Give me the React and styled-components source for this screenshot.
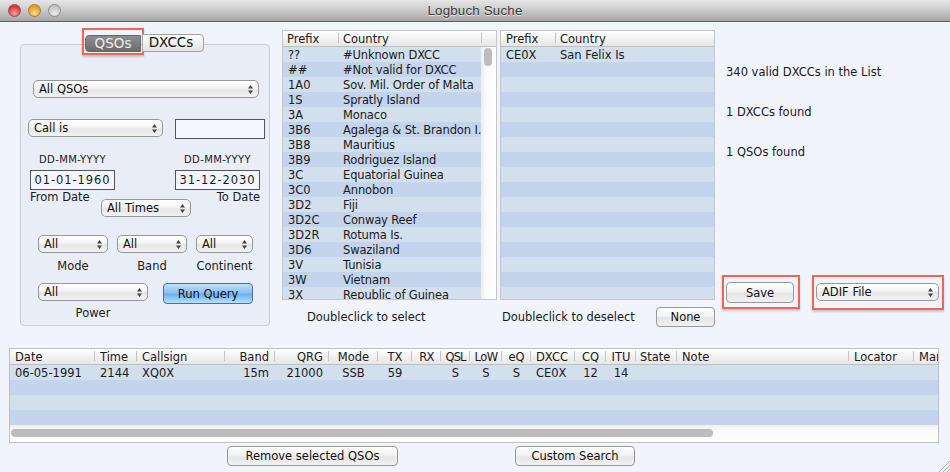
import React from "react";
import styled, { createGlobalStyle } from "styled-components";

const Global = createGlobalStyle`
  html, body { margin: 0; padding: 0; background: #f1f4fd; }
  * { box-sizing: border-box; }
`;
const FONT = `"DejaVu Sans", "Liberation Sans", sans-serif`;

const Window = styled.div`
  position: relative; width: 950px; height: 472px; overflow: hidden;
  background: #f1f4fd; font-family: ${FONT}; font-size: 11.5px; color: #1a1a1a;
`;
const TitleBar = styled.div`
  height: 22px; display: flex; align-items: center; position: relative;
  background: linear-gradient(#e6e6e6, #d0d0d0 40%, #a6a6a6);
  border-bottom: 1px solid #5f5f5f; padding-left: 8px; gap: 7px;
`;
const Light = styled.span`
  width: 13px; height: 13px; border-radius: 50%;
  border: 1px solid ${p => p.$edge};
  background: radial-gradient(circle at 50% 75%, ${p => p.$hi}, ${p => p.$c} 70%);
`;
const Title = styled.div`
  flex: 1; text-align: center; margin-left: -68px; font-size: 13.3px; font-family: "Liberation Sans", sans-serif;
  color: #3c3c3c; text-shadow: 0 1px 0 #e4e4e4; letter-spacing: .2px;
`;
const TopRow = styled.div`display: flex; height: 305px;`;
const LeftCol = styled.div`width: 250px; margin-left: 20px; padding-top: 6px; flex: none;`;
const TabBar = styled.div`
  display: flex; align-items: flex-start; margin-left: 62px; position: relative; z-index: 1; height: 27px;
`;
const Highlight = styled.div`
  display: flex; align-items: ${p => p.$align || "center"}; flex: none;
  border: 2px solid #f26650; box-shadow: 0 2px 2px rgba(0,0,0,.18);
  padding: ${p => p.$pad};
`;
const Tab = styled.div`
  height: 17px; display: flex; align-items: center; justify-content: center; font-size: 13.5px; line-height: 1;
  width: ${p => p.$w}px;
  ${p => p.$on
    ? `background: linear-gradient(#8e8e8e, #6c6c6c); color: #ededed; border-radius: 4px 0 0 4px; border: 1px solid #666;`
    : `background: linear-gradient(#fff, #f0f0f0 50%, #e2e2e2); color: #111; border-radius: 0 4px 4px 0; border: 1px solid #a4a4a4; height: 18px; margin-top: 6px; margin-left: -2px; padding-right: 4px;`}
`;
const Panel = styled.div`
  height: 282px; margin-top: -11px; background: #e9edf8;
  border: 1px solid #c8ccd6; border-radius: 4px;
`;
const Row = styled.div`
  display: flex; align-items: flex-start; margin-top: ${p => p.$top}px; padding-left: ${p => p.$left}px; gap: ${p => p.$gap || 0}px;
`;
const SelectBox = styled.div`
  flex: none; height: 18px; width: ${p => p.$w}px; display: flex; align-items: center; justify-content: space-between;
  padding: 0 5px 0 5px; border: 1px solid #989898; border-radius: 5px; color: #111;
  background: linear-gradient(#fff, #f4f4f4 45%, #e6e6e6 55%, #f2f2f2); font-size: 11.5px;
  white-space: nowrap;
`;
const Arrows = () => (
  <svg width="5" height="9" viewBox="0 0 5 9"><path d="M2.5 0 L5 3.4 H0Z M2.5 9 L5 5.6 H0Z" fill="#444" /></svg>
);
const Select = ({ w, children }) => <SelectBox $w={w}>{children}<Arrows /></SelectBox>;
const TextBox = styled.div`
  width: ${p => p.$w}px; height: 20px; border: 1px solid #555; background: #f3f6fe; flex: none;
  display: flex; align-items: center; justify-content: center; font-size: 11.5px; letter-spacing: .9px;
`;
const DateGrid = styled.div`
  display: grid; grid-template-columns: 71px 14px 60px 16px 69px; margin: 14px 0 0 9px; width: 230px;
`;
const DateCell = styled.div`
  grid-column: ${p => p.$col}; text-align: ${p => p.$align || "center"}; line-height: 14px; white-space: nowrap;
  font-size: ${p => p.$small ? "10px" : "11.5px"};
  letter-spacing: ${p => p.$small ? ".4px" : "0"};
  margin-bottom: ${p => p.$mb || 0}px; margin-top: ${p => p.$mt || 0}px;
  display: ${p => p.$flex ? "flex" : "block"};
`;
const FilterGrid = styled.div`
  display: grid; grid-template-columns: 70px 70px 57px; column-gap: 9px; row-gap: 6px; margin: 18px 0 0 17px; width: 220px;
`;
const Caption = styled.div`
  text-align: center; line-height: 14px; white-space: nowrap;
`;
const PowerRow = styled.div`display: flex; gap: 15px; margin: 10px 0 0 17px; align-items: flex-start;`;
const PowerCol = styled.div`display: flex; flex-direction: column; gap: 5px; width: 110px;`;
const RunButton = styled.div`
  width: 90px; height: 21px; display: flex; align-items: center; justify-content: center;
  border: 1px solid #4a6ea8; border-radius: 4px; color: #111; font-size: 11.5px;
  background: linear-gradient(#c4def8, #8dc0f3 45%, #6cb0f2 55%, #b6e2fb);
`;
const ListsGrid = styled.div`
  display: grid; grid-template-columns: 215px 215px; column-gap: 3px; margin: 8px 0 0 12px; align-content: start;
  flex: none;
`;
const ListBox = styled.div`
  height: 270px; border: 1px solid #c6c6c6; background: #fff; overflow: hidden; display: flex; flex-direction: column;
`;
const Header = styled.div`
  flex: none; height: 16px; display: grid; grid-template-columns: ${p => p.$cols};
  background: linear-gradient(#fff, #f2f2f2 50%, #e6e6e6); border-bottom: 1px solid #c0c0c0; color: #1a1a1a;
`;
const HeadCell = styled.div`
  line-height: 17px; padding: 0 ${p => p.$pr || 0}px 0 ${p => p.$pl || 0}px; white-space: nowrap; overflow: hidden;
  text-align: ${p => p.$align || "left"}; letter-spacing: ${p => p.$ls || 0}px;
  background: linear-gradient(#c4c4c4, #c4c4c4) right 2px / 1px 10px no-repeat;
  ${p => p.$plain ? "background: none;" : ""}
`;
const ListBody = styled.div`flex: 1; display: flex; min-height: 0;`;
const Rows = styled.div`flex: 1; overflow: hidden; min-width: 0;`;
const ListRow = styled.div`
  height: 15px; line-height: 17px; display: grid; grid-template-columns: ${p => p.$cols};
  background: ${p => p.$odd ? "#c3d4ec" : "#d2dfed"}; white-space: nowrap; color: #1a1a1a;
`;
const Cell = styled.div`
  padding: 0 ${p => p.$pr || 0}px 0 ${p => p.$pl || 0}px; text-align: ${p => p.$align || "left"}; overflow: hidden;
  letter-spacing: ${p => p.$ls || 0}px;
`;
const ScrollColumn = styled.div`
  width: 15px; flex: none; padding: 1px 4px 0 3px;
  background: linear-gradient(90deg, #ececec, #fafafa 30%, #fff);
`;
const Thumb = styled.div`height: 18px; border-radius: 4px; background: #bcbcbc;`;
const Hint = styled.div`
  display: flex; align-items: center; height: 20px; margin-top: 7px; padding-left: ${p => p.$left}px; white-space: nowrap;
  justify-content: space-between; letter-spacing: -.05px;
`;
const Button = styled.div`
  flex: none; width: ${p => p.$w}px; height: ${p => p.$h || 21}px; display: flex; align-items: center; justify-content: center;
  border: 1px solid #999; border-radius: 4px; color: #111; font-size: 11.5px; white-space: nowrap;
  background: linear-gradient(#fff, #f3f3f3 45%, #e5e5e5 55%, #f1f1f1);
`;
const RightCol = styled.div`margin: 8px 0 0 7px; flex: none; width: 225px;`;
const Stats = styled.div`
  display: flex; flex-direction: column; gap: 26px; padding: 35px 0 0 4px; height: 245px; line-height: 14px;
`;
const SaveRow = styled.div`display: flex; gap: 12px; align-items: flex-start;`;
const Bottom = styled.div`padding: 21px 0 0 9px;`;
const LogTable = styled.div`
  width: 930px; height: 95px; border: 1px solid #c0c0c0; background: #fff; overflow: hidden; display: flex; flex-direction: column;
`;
const ScrollTrack = styled.div`
  flex: 1; padding: 4px 225px 0 1px; background: linear-gradient(#eeeeee, #fafafa 30%, #fff);
`;
const HThumb = styled.div`height: 8px; border-radius: 4px; background: #bcbcbc;`;
const BottomButtons = styled.div`display: flex; margin: 3px 0 0 218px; gap: 117px;`;
const Grip = styled.svg`position: absolute; right: 0; bottom: 0;`;

const countries = [
  ["??", "#Unknown DXCC"], ["##", "#Not valid for DXCC"], ["1A0", "Sov. Mil. Order of Malta"],
  ["1S", "Spratly Island"], ["3A", "Monaco"], ["3B6", "Agalega & St. Brandon I."],
  ["3B8", "Mauritius"], ["3B9", "Rodriguez Island"], ["3C", "Equatorial Guinea"],
  ["3C0", "Annobon"], ["3D2", "Fiji"], ["3D2C", "Conway Reef"], ["3D2R", "Rotuma Is."],
  ["3D6", "Swaziland"], ["3V", "Tunisia"], ["3W", "Vietnam"], ["3X", "Republic of Guinea"],
];
const logCols = [
  { t: "Date", w: 85, a: "left", pl: 5, v: "06-05-1991" },
  { t: "Time", w: 42, a: "left", pl: 5, v: "2144" },
  { t: "Callsign", w: 88, a: "left", pl: 5, v: "XQ0X" },
  { t: "Band", w: 50, a: "right", pr: 6, v: "15m" },
  { t: "QRG", w: 54, a: "right", pr: 6, v: "21000" },
  { t: "Mode", w: 49, a: "center", v: "SSB" },
  { t: "TX", w: 34, a: "center", v: "59" },
  { t: "RX", w: 29, a: "center", v: "", ls: -0.8 },
  { t: "QSL", w: 29, a: "center", v: "S", ls: -1 },
  { t: "LoW", w: 32, a: "center", v: "S", ls: -0.5 },
  { t: "eQ", w: 29, a: "center", v: "S" },
  { t: "DXCC", w: 44, a: "left", pl: 5, v: "CE0X" },
  { t: "CQ", w: 31, a: "center", v: "12" },
  { t: "ITU", w: 30, a: "center", v: "14" },
  { t: "State", w: 41, a: "left", pl: 4, v: "" },
  { t: "Note", w: 172, a: "left", pl: 5, v: "" },
  { t: "Locator", w: 65, a: "left", pl: 5, v: "" },
  { t: "Mar", w: 40, a: "left", pl: 5, v: "", plain: true },
];
const logTemplate = logCols.map(c => c.w + "px").join(" ");
const LEFT_COLS = "56px 143px";
const RIGHT_COLS = "55px 158px";

export default function App() {
  return (
    <Window>
      <Global />
      <TitleBar>
        <Light $c="#d8373a" $hi="#f7a0a0" $edge="#9a4a4c" />
        <Light $c="#e59b1f" $hi="#fbdc8c" $edge="#a47a3c" />
        <Light $c="#c2c2c2" $hi="#ececec" $edge="#8e8e8e" />
        <Title>Logbuch Suche</Title>
      </TitleBar>
      <TopRow>
        <LeftCol>
          <TabBar>
            <Highlight $align="flex-start" $pad="5px 1px 1px 1px"><Tab $on $w={56}>QSOs</Tab></Highlight>
            <Tab $w={62}>DXCCs</Tab>
          </TabBar>
          <Panel>
            <Row $top={35} $left={12}><Select w={226}>All QSOs</Select></Row>
            <Row $top={21} $left={7} $gap={12}>
              <Select w={135}>Call is</Select>
              <TextBox $w={90} />
            </Row>
            <DateGrid>
              <DateCell $col="1 / 3" $small $mb={3}>DD-MM-YYYY</DateCell>
              <DateCell $col="4 / 6" $small $mb={3}>DD-MM-YYYY</DateCell>
              <DateCell $col="1 / 3" $flex><TextBox $w={85}>01-01-1960</TextBox></DateCell>
              <DateCell $col="4 / 6" $flex><TextBox $w={85}>31-12-2030</TextBox></DateCell>
              <DateCell $col="1" $align="left">From Date</DateCell>
              <DateCell $col="2 / 5" $flex $mt={9}><Select w={90}>All Times</Select></DateCell>
              <DateCell $col="5" $align="right">To Date</DateCell>
            </DateGrid>
            <FilterGrid>
              <Select w={70}>All</Select>
              <Select w={70}>All</Select>
              <Select w={57}>All</Select>
              <Caption>Mode</Caption>
              <Caption>Band</Caption>
              <Caption>Continent</Caption>
            </FilterGrid>
            <PowerRow>
              <PowerCol>
                <Select w={110}>All</Select>
                <Caption>Power</Caption>
              </PowerCol>
              <RunButton>Run Query</RunButton>
            </PowerRow>
          </Panel>
        </LeftCol>

        <ListsGrid>
          <ListBox>
            <Header $cols={`56px 143px 14px`}>
              <HeadCell $pl={4}>Prefix</HeadCell>
              <HeadCell $pl={4}>Country</HeadCell>
              <HeadCell $plain />
            </Header>
            <ListBody>
              <Rows>
                {countries.map((c, i) => (
                  <ListRow key={c[0]} $odd={i % 2 === 1} $cols={LEFT_COLS}>
                    <Cell $pl={5}>{c[0]}</Cell>
                    <Cell $pl={4} $ls={-0.14}>{c[1]}</Cell>
                  </ListRow>
                ))}
              </Rows>
              <ScrollColumn><Thumb /></ScrollColumn>
            </ListBody>
          </ListBox>
          <ListBox>
            <Header $cols={`55px 158px`}>
              <HeadCell $pl={5}>Prefix</HeadCell>
              <HeadCell $pl={4} $plain>Country</HeadCell>
            </Header>
            <Rows>
              {countries.map((c, i) => (
                <ListRow key={c[0]} $odd={i % 2 === 1} $cols={RIGHT_COLS}>
                  <Cell $pl={5}>{i === 0 ? "CE0X" : ""}</Cell>
                  <Cell $pl={4}>{i === 0 ? "San Felix Is" : ""}</Cell>
                </ListRow>
              ))}
            </Rows>
          </ListBox>
          <Hint $left={25}>Doubleclick to select</Hint>
          <Hint $left={2}>Doubleclick to deselect<Button $w={59} $h={20}>None</Button></Hint>
        </ListsGrid>

        <RightCol>
          <Stats>
            <div>340 valid DXCCs in the List</div>
            <div>1 DXCCs found</div>
            <div>1 QSOs found</div>
          </Stats>
          <SaveRow>
            <Highlight $align="flex-start" $pad="5px 4px 4px 2px"><Button $w={68} $h={21}>Save</Button></Highlight>
            <Highlight $align="flex-start" $pad="6px 3px 7px 2px"><Select w={123}>ADIF File</Select></Highlight>
          </SaveRow>
        </RightCol>
      </TopRow>

      <Bottom>
        <LogTable>
          <Header $cols={logTemplate}>
            {logCols.map(c => (
              <HeadCell key={c.t} $align={c.a} $pl={c.pl} $pr={c.a === "right" ? 6 : 0} $plain={c.plain} $ls={c.ls}>{c.t}</HeadCell>
            ))}
          </Header>
          {[0, 1, 2, 3].map(r => (
            <ListRow key={r} $odd={r % 2 === 1} $cols={logTemplate}>
              {logCols.map(c => (
                <Cell key={c.t} $align={c.a} $pl={c.pl} $pr={c.pr}>{r === 0 ? c.v : ""}</Cell>
              ))}
            </ListRow>
          ))}
          <ScrollTrack><HThumb /></ScrollTrack>
        </LogTable>
        <BottomButtons>
          <Button $w={171} $h={20}>Remove selected QSOs</Button>
          <Button $w={120} $h={20}>Custom Search</Button>
        </BottomButtons>
      </Bottom>
      <Grip width="12" height="12" viewBox="0 0 12 12">
        <path d="M1 12 L12 1 M5 12 L12 5 M9 12 L12 9" stroke="#a8a8a8" strokeWidth="1" fill="none" />
      </Grip>
    </Window>
  );
}
